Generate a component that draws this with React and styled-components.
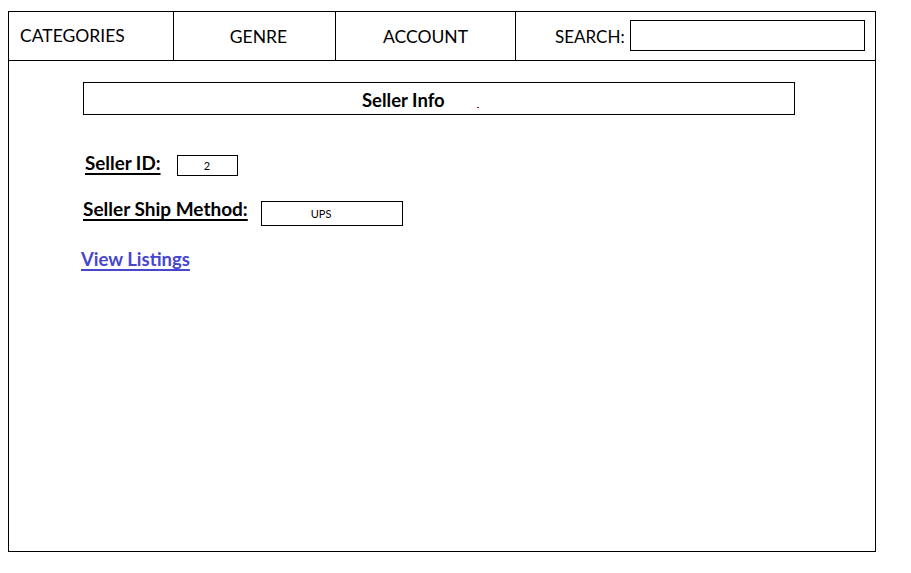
import React from "react";
import styled, { createGlobalStyle } from "styled-components";

const Global = createGlobalStyle`
  html, body { margin: 0; padding: 0; background: #fff; }
  body { font-family: Lato, "Open Sans", sans-serif; color: #000; }
  * { box-sizing: border-box; }
`;

const Frame = styled.div`
  margin: 11px 0 0 8px;
  width: 868px;
  height: 541px;
  border: 1px solid #000;
  display: flex;
  flex-direction: column;
`;

const Nav = styled.nav`
  display: grid;
  grid-template-columns: 165px 162px 180px 1fr;
  height: 49px;
  border-bottom: 1px solid #000;
`;

const NavCell = styled.div`
  display: flex;
  align-items: center;
  justify-content: ${(p) => (p.$align === "left" ? "flex-start" : "center")};
  padding-left: ${(p) => p.$pl || 0}px;
  padding-top: ${(p) => p.$pt || 0}px;
  padding-bottom: ${(p) => p.$pb || 0}px;
  border-right: 1px solid #000;
  font-size: 17.5px;
`;

const SearchCell = styled.div`
  display: flex;
  align-items: center;
  padding-left: 39px;
  gap: 5px;
  font-size: 17px;
  padding-top: 1px;
`;

const SearchBox = styled.div`
  width: 235px;
  height: 31px;
  border: 1px solid #000;
  margin-bottom: 2px;
`;

const Content = styled.div`
  padding: 21px 0 0 74px;
  display: flex;
  flex-direction: column;
  align-items: flex-start;
`;

const TitleBox = styled.div`
  width: 712px;
  height: 33px;
  border: 1px solid #000;
  display: flex;
  align-items: center;
  justify-content: flex-start;
  padding-left: 278px;
  padding-top: 2px;
  font-weight: 700;
  font-size: 18.5px;
  position: relative;
`;

const RedTick = styled.span`
  position: absolute;
  left: 393px;
  top: 24px;
  width: 2px;
  height: 1px;
  background: #7a1020;
`;

const Row = styled.div`
  display: flex;
  align-items: flex-start;
  margin-top: ${(p) => p.$mt}px;
  margin-left: ${(p) => p.$ml}px;
  gap: ${(p) => p.$gap}px;
`;

const Label = styled.span`
  font-weight: 700;
  font-size: ${(p) => p.$fs || 19}px;
  line-height: 22px;
  text-decoration: underline;
  text-decoration-thickness: 2px;
  text-underline-offset: 3px;
`;

const ValueBox = styled.div`
  width: ${(p) => p.$w}px;
  height: ${(p) => p.$h}px;
  border: 1px solid #000;
  font-size: 11px;
  display: flex;
  align-items: center;
  justify-content: ${(p) => (p.$left ? "flex-start" : "center")};
  padding-left: ${(p) => p.$pl || 0}px;
  margin-top: ${(p) => p.$mt || 0}px;
`;

const Link = styled.a`
  margin-top: 22px;
  margin-left: -2px;
  color: #4646cf;
  font-weight: 700;
  font-size: 18.5px;
  line-height: 22px;
  text-decoration: underline;
  text-decoration-thickness: 2px;
  text-underline-offset: 3px;
  cursor: pointer;
`;

export default function App() {
  return (
    <>
      <Global />
      <Frame>
        <Nav>
          <NavCell $align="left" $pl={11} $pb={1}>CATEGORIES</NavCell>
          <NavCell $pl={8} $pt={1}>GENRE</NavCell>
          <NavCell>ACCOUNT</NavCell>
          <SearchCell>
            SEARCH:
            <SearchBox />
          </SearchCell>
        </Nav>
        <Content>
          <TitleBox>
            Seller Info
            <RedTick />
          </TitleBox>
          <Row $mt={37} $ml={2} $gap={16}>
            <Label $fs={18.8}>Seller ID:</Label>
            <ValueBox $w={61} $h={21} $mt={3}>2</ValueBox>
          </Row>
          <Row $mt={22} $ml={0} $gap={13}>
            <Label>Seller Ship Method:</Label>
            <ValueBox $w={142} $h={25} $mt={3} $left $pl={49}>UPS</ValueBox>
          </Row>
          <Link>View Listings</Link>
        </Content>
      </Frame>
    </>
  );
}
